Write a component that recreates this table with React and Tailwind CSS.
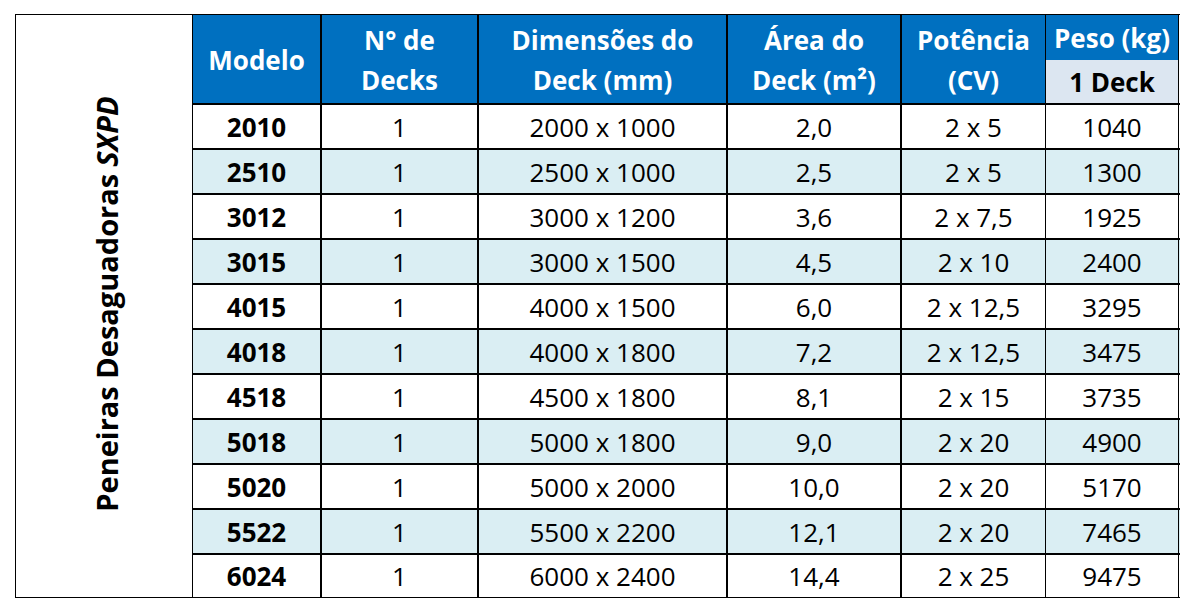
import React from "react";

const rows = [
  ["2010", "1", "2000 x 1000", "2,0", "2 x 5", "1040"],
  ["2510", "1", "2500 x 1000", "2,5", "2 x 5", "1300"],
  ["3012", "1", "3000 x 1200", "3,6", "2 x 7,5", "1925"],
  ["3015", "1", "3000 x 1500", "4,5", "2 x 10", "2400"],
  ["4015", "1", "4000 x 1500", "6,0", "2 x 12,5", "3295"],
  ["4018", "1", "4000 x 1800", "7,2", "2 x 12,5", "3475"],
  ["4518", "1", "4500 x 1800", "8,1", "2 x 15", "3735"],
  ["5018", "1", "5000 x 1800", "9,0", "2 x 20", "4900"],
  ["5020", "1", "5000 x 2000", "10,0", "2 x 20", "5170"],
  ["5522", "1", "5500 x 2200", "12,1", "2 x 20", "7465"],
  ["6024", "1", "6000 x 2400", "14,4", "2 x 25", "9475"],
];

const cols = "grid grid-cols-[127px_157px_249px_174px_145px_134px]";
const leftB = ["", "border-l-2", "border-l-2", "border-l-2", "border-l-2", "border-l border-r"];

export default function App() {
  return (
    <div className="w-[1196px] h-[614px] bg-white pt-[14px] pl-[15px] text-black" style={{ fontFamily: '"Open Sans", "Noto Sans", sans-serif' }}>
      <div className="inline-flex h-[584px] border-l border-t border-b border-black">
        <div className="w-[177px] shrink-0 border-r border-black flex items-center justify-center pl-[4px] pb-[4px]">
          <div className="[writing-mode:vertical-rl] rotate-180 font-bold text-[29px] leading-none whitespace-nowrap">
            Peneiras Desaguadoras <span className="italic ml-[6px]">SXPD</span>
          </div>
        </div>
        <div className="flex flex-col w-[987px] shrink-0">
          <div className={`${cols} h-[90px] border-b-2 border-black text-white font-bold text-[26px] leading-[40px]`}>
            <div className="bg-[#0070C0] flex items-center justify-center pt-[2px]">Modelo</div>
            <div className="bg-[#0070C0] border-l-2 border-black flex flex-col items-center justify-center pt-[2px]">
              <span>N° de</span>
              <span>Decks</span>
            </div>
            <div className="bg-[#0070C0] border-l-2 border-black flex flex-col items-center justify-center pt-[2px]">
              <span>Dimensões do</span>
              <span>Deck (mm)</span>
            </div>
            <div className="bg-[#0070C0] border-l-2 border-black flex flex-col items-center justify-center pt-[2px]">
              <span>Área do</span>
              <span>Deck (m²)</span>
            </div>
            <div className="bg-[#0070C0] border-l-2 border-black flex flex-col items-center justify-center pt-[2px]">
              <span>Potência</span>
              <span>(CV)</span>
            </div>
            <div className="border-l border-r border-black flex flex-col">
              <div className="bg-[#0070C0] h-[45px] flex items-center justify-center whitespace-nowrap">Peso (kg)</div>
              <div className="bg-[#DCE6F1] flex-1 flex items-center justify-center text-black">1 Deck</div>
            </div>
          </div>
          {rows.map((r, i) => (
            <div
              key={r[0]}
              className={`${cols} ${i === rows.length - 1 ? "flex-1" : "h-[45px] border-b-2"} border-black text-[26px] leading-none ${i % 2 === 1 ? "bg-[#DAEEF3]" : "bg-white"}`}
            >
              {r.map((c, j) => (
                <div
                  key={j}
                  className={`${leftB[j]} border-black flex items-center justify-center ${j === 0 ? "font-bold" : ""}`}
                >
                  {c}
                </div>
              ))}
            </div>
          ))}
        </div>
      </div>
    </div>
  );
}
